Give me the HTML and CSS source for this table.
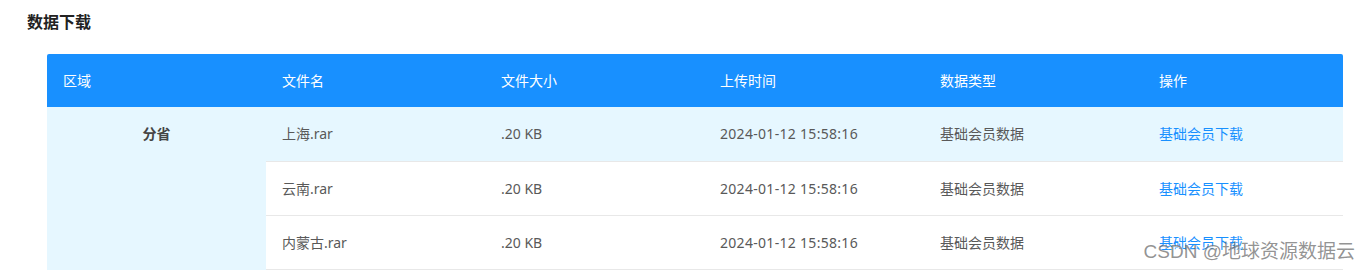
FILE: index.html
```html
<!DOCTYPE html>
<html lang="zh-CN">
  <head>
    <meta charset="UTF-8">
    <title>数据下载</title>
    <link rel="stylesheet" href="styles.css">
  </head>
  <body>
    <div class="page">
      <h3 class="page-title">数据下载</h3>
      <table class="data-table">
        <colgroup>
          <col class="col-region">
          <col class="col-name">
          <col class="col-size">
          <col class="col-time">
          <col class="col-type">
          <col class="col-action">
        </colgroup>
        <thead>
          <tr>
            <th>区域</th>
            <th>文件名</th>
            <th>文件大小</th>
            <th>上传时间</th>
            <th>数据类型</th>
            <th>操作</th>
          </tr>
        </thead>
        <tbody>
          <tr class="is-active">
            <td class="region" rowspan="3">分省</td>
            <td>上海.rar</td>
            <td>.20 KB</td>
            <td class="time">2024-01-12 15:58:16</td>
            <td>基础会员数据</td>
            <td><a href="#">基础会员下载</a></td>
          </tr>
          <tr>
            <td>云南.rar</td>
            <td>.20 KB</td>
            <td class="time">2024-01-12 15:58:16</td>
            <td>基础会员数据</td>
            <td><a href="#">基础会员下载</a></td>
          </tr>
          <tr>
            <td>内蒙古.rar</td>
            <td>.20 KB</td>
            <td class="time">2024-01-12 15:58:16</td>
            <td>基础会员数据</td>
            <td><a href="#">基础会员下载</a></td>
          </tr>
        </tbody>
      </table>
    </div>
    <div class="watermark">CSDN @地球资源数据云</div>
  </body>
</html>
```

FILE: styles.css
```css
:root {
  --primary: #1890ff;
  --row-hover: #e6f7ff;
  --border: #e8e8e8;
  --text: #595959;
}

body {
  margin: 0;
  font-family: "Noto Sans", "Noto Sans CJK SC", sans-serif;
  background: #fff;
  color: var(--text);
  overflow: hidden;
}

.page {
  padding: 11px 27px 0 27px;
}

.page-title {
  margin: 0 0 21px 0;
  font-size: 16px;
  line-height: 22px;
  font-weight: bold;
  color: #222;
}

.data-table {
  margin-left: 20px;
  width: 1296px;
  border-collapse: collapse;
  table-layout: fixed;
  font-size: 14px;
}

.col-region { width: 219px; }
.col-name { width: 219px; }
.col-size { width: 219px; }
.col-time { width: 220px; }
.col-type { width: 219px; }
.col-action { width: 200px; }

.data-table th {
  background: var(--primary);
  color: #fff;
  font-weight: normal;
  text-align: left;
  padding: 16px 16px;
  line-height: 21px;
}

.data-table th:first-child {
  border-top-left-radius: 2px;
}

.data-table th:last-child {
  border-top-right-radius: 2px;
}

.data-table td {
  padding: 16px 16px;
  line-height: 21px;
  border-bottom: 1px solid var(--border);
  white-space: nowrap;
}

.data-table td.time {
  letter-spacing: 0.3px;
}

.data-table tr.is-active td {
  background: var(--row-hover);
  padding-bottom: 17px;
}

.data-table td.region {
  background: var(--row-hover);
  border-bottom: none;
  text-align: center;
  vertical-align: top;
  font-weight: bold;
  color: #444;
}

.data-table a {
  color: var(--primary);
  text-decoration: none;
}

.watermark {
  position: absolute;
  right: 15px;
  bottom: 8px;
  font-size: 19px;
  line-height: 24px;
  color: rgba(100, 100, 100, 0.7);
  text-shadow: 1px 1px 1px #fff;
  font-family: "Liberation Sans", "Noto Sans CJK SC", sans-serif;
}
```
